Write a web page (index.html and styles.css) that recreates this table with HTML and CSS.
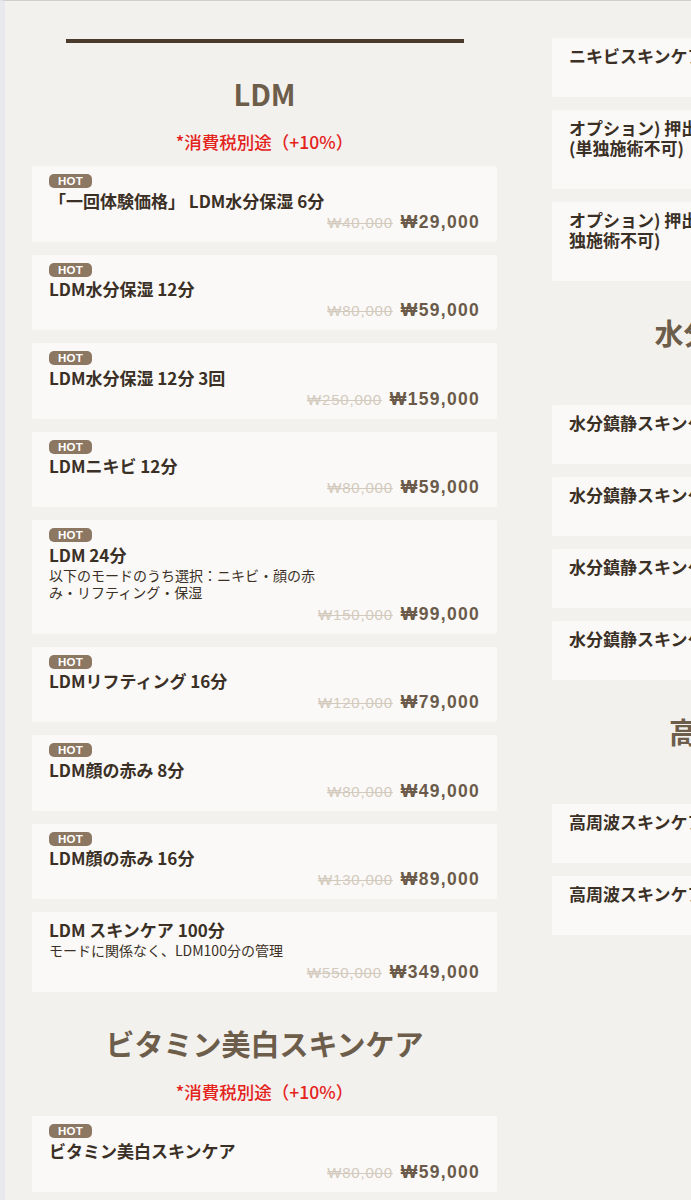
FILE: index.html
```html
<!DOCTYPE html>
<html lang="ja">
<head>
<meta charset="utf-8">
<title>メニュー</title>
<link rel="stylesheet" href="styles.css">
</head>
<body>
<div class="page">
  <div class="columns">
    <div class="col">
      <div class="divider"></div>
      <section class="section">
        <h2 class="sec-title">LDM</h2>
        <p class="tax">*消費税別途（+10%）</p>
        <div class="list">
          <div class="card">
            <span class="badge">HOT</span>
            <div class="name">「一回体験価格」 LDM水分保湿 6分</div>
            <div class="price"><span class="old">₩40,000</span><span class="new">₩29,000</span></div>
          </div>
          <div class="card">
            <span class="badge">HOT</span>
            <div class="name">LDM水分保湿 12分</div>
            <div class="price"><span class="old">₩80,000</span><span class="new">₩59,000</span></div>
          </div>
          <div class="card">
            <span class="badge">HOT</span>
            <div class="name">LDM水分保湿 12分 3回</div>
            <div class="price"><span class="old">₩250,000</span><span class="new">₩159,000</span></div>
          </div>
          <div class="card">
            <span class="badge">HOT</span>
            <div class="name">LDMニキビ 12分</div>
            <div class="price"><span class="old">₩80,000</span><span class="new">₩59,000</span></div>
          </div>
          <div class="card">
            <span class="badge">HOT</span>
            <div class="name">LDM 24分</div>
            <p class="desc">以下のモードのうち選択：ニキビ・顔の赤み・リフティング・保湿</p>
            <div class="price"><span class="old">₩150,000</span><span class="new">₩99,000</span></div>
          </div>
          <div class="card">
            <span class="badge">HOT</span>
            <div class="name">LDMリフティング 16分</div>
            <div class="price"><span class="old">₩120,000</span><span class="new">₩79,000</span></div>
          </div>
          <div class="card">
            <span class="badge">HOT</span>
            <div class="name">LDM顔の赤み 8分</div>
            <div class="price"><span class="old">₩80,000</span><span class="new">₩49,000</span></div>
          </div>
          <div class="card">
            <span class="badge">HOT</span>
            <div class="name">LDM顔の赤み 16分</div>
            <div class="price"><span class="old">₩130,000</span><span class="new">₩89,000</span></div>
          </div>
          <div class="card">
            <div class="name">LDM スキンケア 100分</div>
            <p class="desc">モードに関係なく、LDM100分の管理</p>
            <div class="price"><span class="old">₩550,000</span><span class="new">₩349,000</span></div>
          </div>
        </div>
      </section>
      <section class="section">
        <h2 class="sec-title">ビタミン美白スキンケア</h2>
        <p class="tax">*消費税別途（+10%）</p>
        <div class="list">
          <div class="card">
            <span class="badge">HOT</span>
            <div class="name">ビタミン美白スキンケア</div>
            <div class="price"><span class="old">₩80,000</span><span class="new">₩59,000</span></div>
          </div>
          <div class="card">
            <span class="badge">HOT</span>
            <div class="name">ビタミン美白スキンケア 3回</div>
            <div class="price"><span class="old">₩240,000</span><span class="new">₩159,000</span></div>
          </div>
        </div>
      </section>
    </div>

    <div class="col">
      <div class="list">
        <div class="card">
          <div class="name">ニキビスキンケア（3回）</div>
          <div class="price"><span class="old">₩270,000</span><span class="new">₩199,000</span></div>
        </div>
        <div class="card">
          <div class="name">オプション) 押出し（面皰圧出）10か所まで<br>(単独施術不可)</div>
          <div class="price"><span class="old">₩30,000</span><span class="new">₩20,000</span></div>
        </div>
        <div class="card">
          <div class="name">オプション) 押出し（面皰圧出）全顔 (単<br>独施術不可)</div>
          <div class="price"><span class="old">₩50,000</span><span class="new">₩35,000</span></div>
        </div>
      </div>
      <section class="section">
        <h2 class="sec-title">水分鎮静スキンケア</h2>
        <p class="tax">*消費税別途（+10%）</p>
        <div class="list">
          <div class="card">
            <div class="name">水分鎮静スキンケア 60分</div>
            <div class="price"><span class="old">₩100,000</span><span class="new">₩69,000</span></div>
          </div>
          <div class="card">
            <div class="name">水分鎮静スキンケア 90分</div>
            <div class="price"><span class="old">₩150,000</span><span class="new">₩99,000</span></div>
          </div>
          <div class="card">
            <div class="name">水分鎮静スキンケア 60分 3回</div>
            <div class="price"><span class="old">₩300,000</span><span class="new">₩199,000</span></div>
          </div>
          <div class="card">
            <div class="name">水分鎮静スキンケア 90分 3回</div>
            <div class="price"><span class="old">₩450,000</span><span class="new">₩279,000</span></div>
          </div>
        </div>
      </section>
      <section class="section">
        <h2 class="sec-title">高周波スキンケア</h2>
        <p class="tax">*消費税別途（+10%）</p>
        <div class="list">
          <div class="card">
            <div class="name">高周波スキンケア 60分</div>
            <div class="price"><span class="old">₩120,000</span><span class="new">₩89,000</span></div>
          </div>
          <div class="card">
            <div class="name">高周波スキンケア 90分</div>
            <div class="price"><span class="old">₩180,000</span><span class="new">₩129,000</span></div>
          </div>
        </div>
      </section>
    </div>
  </div>
</div>
</body>
</html>
```
FILE: styles.css
```css
html, body {
  margin: 0;
  padding: 0;
  overflow: hidden;
  background: #f3f1ee;
}
body {
  font-family: "Noto Sans CJK JP", "Noto Sans", sans-serif;
  color: #3b3026;
}
.page {
  min-height: 1200px;
  border-left: 5px solid #e8e8ef;
  border-top: 1px solid #cfcfcf;
  padding: 37px 0 0 27px;
  box-sizing: border-box;
}
.columns {
  display: grid;
  grid-template-columns: 465px 465px;
  column-gap: 55px;
  align-items: start;
}
.col {
  display: flex;
  flex-direction: column;
}
.divider {
  width: 398px;
  height: 4px;
  margin: 1px auto 0;
  background: #4b3b2c;
}
.section {
  display: flex;
  flex-direction: column;
}
.sec-title {
  margin: 31px 0 0;
  font-size: 29px;
  line-height: 40px;
  font-weight: 700;
  text-align: center;
  color: #6d5d4b;
}
.divider + .section .sec-title {
  margin-top: 30px;
}
.tax {
  margin: 17px 0 0;
  font-size: 17.5px;
  line-height: 24px;
  font-weight: 500;
  text-align: center;
  color: #e3231c;
}
.list {
  display: flex;
  flex-direction: column;
  gap: 13px;
}
.tax + .list {
  margin-top: 12px;
}
.card {
  background: #faf9f7;
  border-radius: 2px;
  padding: 8px 17px;
  display: flex;
  flex-direction: column;
  align-items: flex-start;
}
.badge {
  display: inline-block;
  height: 14px;
  line-height: 14px;
  padding: 0 9px;
  margin-bottom: 2.5px;
  border-radius: 5px;
  background: #8c7762;
  color: #fff;
  font-family: "Liberation Sans", "Noto Sans", sans-serif;
  font-size: 11.5px;
  font-weight: 700;
  letter-spacing: 0.3px;
}
.name {
  font-size: 17px;
  line-height: 20px;
  font-weight: 700;
  color: #3b3026;
}
.desc {
  margin: 2px 0;
  max-width: 275px;
  font-size: 14px;
  line-height: 17px;
  color: #3b3026;
}
.price {
  align-self: stretch;
  height: 23px;
  display: flex;
  justify-content: flex-end;
  align-items: baseline;
  gap: 8px;
}
.old {
  font-family: "Liberation Sans", "DejaVu Sans", sans-serif;
  font-size: 15px;
  line-height: 23px;
  color: #d3c9bd;
  text-decoration: line-through;
  letter-spacing: 0.8px;
}
.new {
  font-family: "Liberation Sans", "DejaVu Sans", sans-serif;
  font-size: 17.5px;
  line-height: 23px;
  font-weight: 700;
  color: #6b5a49;
  letter-spacing: 1.3px;
}
```
